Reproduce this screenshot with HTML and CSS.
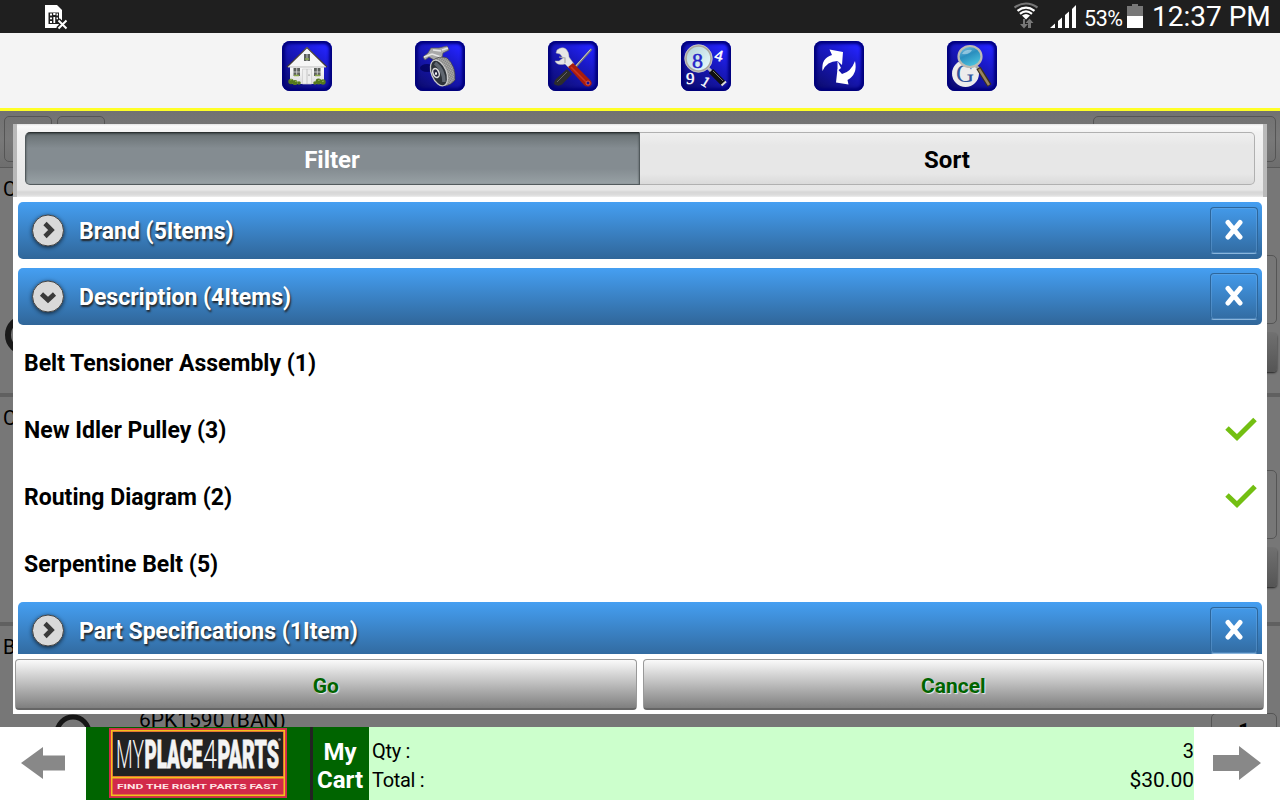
FILE: index.html
```
<!DOCTYPE html>
<html lang="en">
<head>
    <meta charset="UTF-8" />
    <title>MyPlace4Parts - Filter</title>
    <link rel="stylesheet" href="styles.css">
</head>
<body>
    <div class="statusbar">
        <svg class="sim" width="24" height="26" viewBox="0 0 24 26">
            <path d="M0 0H12L17 5V15L13 23H0Z" fill="#fff"/>
            <path d="M3.500 7.500H14V19H3.500Z" fill="#1f1f1f"/>
            <path d="M5 9.500H7M5 13.300H7M5 17H7M11.500 9.500H13M11.500 13.300H13M8.200 9H10.500M9.300 12V18" stroke="#fff" stroke-width="1.800"/>
            <path d="M13 15L22 24M22 15L13 24" stroke="#1f1f1f" stroke-width="5"/>
            <path d="M13.500 15.500L21.500 23.500M21.500 15.500L13.500 23.500" stroke="#fff" stroke-width="2"/>
        </svg>
        <div class="status-right">
            <svg class="wifi" width="24" height="27" viewBox="0 0 24 27" fill="none">
                <path d="M.5 5.500Q12 -2.500 23.500 5.500" stroke="#777" stroke-width="2.200"/>
                <path d="M3.500 8.800Q12 2.500 20.500 8.800M6 11.800Q12 7 18 11.800" stroke="#fff" stroke-width="2.300"/>
                <path d="M8 13.500Q12 10.500 16 13.500L12 17.500Z" fill="#fff"/>
                <path d="M9 17V22H6L10 26.500L14 22H11V17ZM14 26V21H11.500L15.500 16.500L19.500 21H17V26Z" fill="#777"/>
            </svg>
            <svg class="signal" width="27" height="24" viewBox="0 0 27 24" fill="#fff">
                <path d="M0 23L5 18.500V23ZM8 16L12 12.500V23H8ZM15 10L19 6.500V23H15ZM22 4L26 0V23H22Z"/>
            </svg>
            <span class="percent">53%</span>
            <svg class="battery" width="16" height="24" viewBox="0 0 16 24">
                <path d="M0 2H5V0H11V2H16V12H0Z" fill="#777"/>
                <path d="M0 12H16V24H0Z" fill="#fff"/>
            </svg>
            <span class="clock">12:37 PM</span>
        </div>
    </div>

    <div class="header">
        <div class="icon">
            <svg viewBox="0 0 50 50">
                <defs>
                    <linearGradient id="wall" x1="0" y1="0" x2="0" y2="1"><stop offset="0" stop-color="#fff"/><stop offset="1" stop-color="#ddd"/></linearGradient>
                </defs>
                <path d="M8 24H42V43H8Z" fill="url(#wall)"/>
                <path d="M25 6L45 26H5Z" fill="#f6f6f6"/>
                <path d="M5 26L25 6.500L45 26" fill="none" stroke="#433a38" stroke-width="1.200"/>
                <path d="M6 26H44" stroke="#bbb" stroke-width="1"/>
                <path d="M22 13H28V20H22ZM11.500 27H18V35H11.500ZM32 27H38.500V35H32Z" fill="#5c605c"/>
                <path d="M25 13V20M14.700 27V35M35.300 27V35M11 31H18M32 31H39" stroke="#ddd" stroke-width=".8"/>
                <path d="M23 18H27M12 34.500H17M33 34.500H38" stroke="#8aa84a" stroke-width="1.500"/>
                <path d="M20.500 28H29.500V43H20.500Z" fill="#eee" stroke="#ccc" stroke-width=".7"/>
                <path d="M25 28V43" stroke="#bbb" stroke-width=".8"/>
                <circle cx="27" cy="34" r=".5" fill="#333"/>
                <g fill="#567a1c"><circle cx="9" cy="40.500" r="2.700"/><circle cx="13" cy="41.500" r="2.600"/><circle cx="17" cy="42" r="1.800"/><circle cx="41" cy="41" r="2.700"/><circle cx="36.500" cy="40.500" r="2.900"/><circle cx="33" cy="42" r="1.800"/></g>
                <path d="M8 39L10 38.500M13 40.500L15 40M36 39.500L38 39M40 40.500L42 40" stroke="#93b44c" stroke-width="1"/>
            </svg>
        </div>
        <div class="icon">
            <svg viewBox="0 0 50 50">
                <defs>
                    <pattern id="mesh" width="2" height="2" patternUnits="userSpaceOnUse" patternTransform="rotate(30)"><rect width="2" height="2" fill="#b4b4b0"/><path d="M0 0H2M0 0V2" stroke="#5c5c5c" stroke-width=".7"/></pattern>
                </defs>
                <ellipse cx="12" cy="27" rx="7" ry="4" fill="#000050" opacity=".7"/>
                <path d="M8 16L13 12L16 7L24 7L32 5L34 9L28 12L27 17L19 19L14 16L10 19Z" fill="#a9a9a9" stroke="#555" stroke-width=".7"/>
                <path d="M9 16L17 13M18 9L26 10M27 9L33 7M17 13L26 16" stroke="#e6e6e6" stroke-width="1.400"/>
                <path d="M17 20Q24 14 32 17Q41 25 40 39Q36 44 30 45Z" fill="url(#mesh)" stroke="#444" stroke-width=".7"/>
                <ellipse cx="24" cy="32" rx="7.500" ry="13.500" transform="rotate(-22 24 32)" fill="#2e3339" stroke="#c9c9c9" stroke-width="1.300"/>
                <path d="M20 22Q29 29 29 41" stroke="#606770" stroke-width="3.500" fill="none"/>
                <ellipse cx="21" cy="32" rx="3" ry="4.600" transform="rotate(-22 21 32)" fill="#26263f" stroke="#ddd" stroke-width="1.500"/>
                <ellipse cx="21" cy="32.500" rx="1" ry="1.600" fill="#fff"/>
            </svg>
        </div>
        <div class="icon">
            <svg viewBox="0 0 50 50">
                <path d="M43.500 8L24 30" stroke="#777" stroke-width="2.200"/>
                <path d="M42.500 8.500L25 28" stroke="#d0d0d0" stroke-width="1"/>
                <path d="M19 28L24 33L14 43.500Q10 46 6 43Q6 40 8 38Z" fill="#2d2d2d"/>
                <path d="M19 31L9 41" stroke="#666" stroke-width="1"/>
                <path d="M7 20L11 20L15 17L12 13L8 12L9 9Q14 5 18 8Q21 11 21 16L26 23L21 27L17 23Q9 25 7 20Z" fill="#e6e6e6" stroke="#aaa" stroke-width=".5"/>
                <path d="M11 16L17 17L17 22" stroke="#aaa" fill="none" stroke-width="1.200"/>
                <path d="M20 26L25 22L43 40Q45 44 41 45.500Q38 46 36 44Z" fill="#a81c0c"/>
                <path d="M23 26L38 41" stroke="#c83420" stroke-width="1.600"/>
                <circle cx="40" cy="42" r="2" fill="#1414a0" stroke="#e8604a" stroke-width=".9"/>
            </svg>
        </div>
        <div class="icon">
            <svg viewBox="0 0 50 50">
                <defs>
                    <linearGradient id="lens" x1="0" y1="0" x2="1" y2="1"><stop offset="0" stop-color="#b0ced6"/><stop offset="1" stop-color="#ecffff"/></linearGradient>
                </defs>
                <path d="M27 27L32 32" stroke="#bbb" stroke-width="3"/>
                <path d="M30 30L43 43" stroke="#111" stroke-width="6"/>
                <path d="M32 30L42 40" stroke="#777" stroke-width="1"/>
                <path d="M40.500 44.500L45 40.500" stroke="#ddd" stroke-width="2"/>
                <circle cx="17.500" cy="17.500" r="12.800" fill="url(#lens)" stroke="#aaa89f" stroke-width="2.200"/>
                <circle cx="17.500" cy="17.500" r="13.800" fill="none" stroke="#ddd" stroke-width=".6"/>
                <text x="11" y="27" class="digit" font-size="22" fill="#2525c8" stroke="#2525c8" stroke-width=".5">8</text>
                <text x="34" y="20" class="digit" font-size="16" fill="#fff" stroke="#fff" stroke-width=".5" transform="rotate(14 38 14)">4</text>
                <text x="5" y="43" class="digit" font-size="17" fill="#fff" stroke="#fff" stroke-width=".4">9</text>
                <text x="21" y="46" class="digit" font-size="15" fill="#fff" stroke="#fff" stroke-width=".4" transform="rotate(32 25 41)">1</text>
            </svg>
        </div>
        <div class="icon">
            <svg viewBox="0 0 50 50" fill="#fff">
                <path d="M8.500 30Q7 17 18 14L15.500 8.500L29 11L28 24L23.500 20Q13 20 8.500 30Z"/>
                <path d="M41 20Q44 33 33.500 39L34.500 43.500L22 41.500L23.500 28L28 33Q37 31 41 20Z"/>
                <path d="M23.500 20L27 27L23.500 30Z"/>
            </svg>
        </div>
        <div class="icon">
            <svg viewBox="0 0 50 50">
                <defs>
                    <linearGradient id="glass" x1="0" y1="0" x2=".5" y2="1"><stop offset="0" stop-color="#8ccae6"/><stop offset=".5" stop-color="#2a8ebe"/><stop offset="1" stop-color="#49c0dc"/></linearGradient>
                </defs>
                <circle cx="18.500" cy="32.500" r="13.500" fill="#ececec"/>
                <text x="9" y="41" class="digit" font-size="25" fill="#31569c">G</text>
                <path d="M29 25L33 29" stroke="#aaa" stroke-width="3"/>
                <path d="M31.500 27L42.500 44.500" stroke="#3c301c" stroke-width="5"/>
                <path d="M32 28L42 44" stroke="#9a8560" stroke-width="2.500"/>
                <ellipse cx="23" cy="15.500" rx="11.500" ry="10.500" fill="url(#glass)" stroke="#bcbcb4" stroke-width="2.200"/>
                <path d="M15 13Q18 8 25 9Q23 14 15 13Z" fill="#fff" opacity=".4"/>
            </svg>
        </div>
    </div>

    <div class="stage">
        <div class="results">
            <div class="toolbar">
                <span class="tool"></span>
                <span class="tool"></span>
                <span class="tool wide"></span>
            </div>
            <div class="result">
                <span class="part">C</span>
                <svg class="thumb left" width="50" height="50"><circle cx="25" cy="25" r="17" fill="none" stroke="#1a1a1a" stroke-width="6"/></svg>
                <div class="side">
                    <span class="qty"></span>
                    <span class="add"></span>
                </div>
            </div>
            <div class="result high">
                <span class="part">C</span>
                <div class="side">
                    <span class="qty"></span>
                    <span class="add"></span>
                </div>
            </div>
            <div class="result">
                <span class="part">B</span>
                <svg class="thumb" width="40" height="40"><circle cx="20" cy="20" r="16" fill="none" stroke="#161616" stroke-width="5"/></svg>
                <span class="number">6PK1590 (BAN)</span>
                <div class="side">
                    <span class="qty">1</span>
                </div>
            </div>
        </div>

        <div class="dialog">
            <div class="tabs">
                <div class="tab active">Filter</div>
                <div class="tab">Sort</div>
            </div>
            <div class="filters">
                <div class="bar">
                    <svg class="arrow" viewBox="0 0 34 34"><circle cx="17" cy="16.500" r="15.500"/><path d="M14 9.500L20.500 16L14 22.500"/></svg>
                    <span class="bar-title">Brand (5Items)</span>
                    <span class="close"><svg viewBox="0 0 20 22"><path d="M4 3.500L16 18M16 3.500L4 18"/></svg></span>
                </div>
                <div class="bar">
                    <svg class="arrow" viewBox="0 0 34 34"><circle cx="17" cy="16.500" r="15.500"/><path d="M10.500 14L17 20L23.500 14"/></svg>
                    <span class="bar-title">Description (4Items)</span>
                    <span class="close"><svg viewBox="0 0 20 22"><path d="M4 3.500L16 18M16 3.500L4 18"/></svg></span>
                </div>
                <ul>
                    <li>Belt Tensioner Assembly (1)</li>
                    <li>New Idler Pulley (3)<svg class="check" viewBox="0 0 32 24"><path d="M2 11L12 20.500L30 2.500"/></svg></li>
                    <li>Routing Diagram (2)<svg class="check" viewBox="0 0 32 24"><path d="M2 11L12 20.500L30 2.500"/></svg></li>
                    <li>Serpentine Belt (5)</li>
                </ul>
                <div class="bar">
                    <svg class="arrow" viewBox="0 0 34 34"><circle cx="17" cy="16.500" r="15.500"/><path d="M14 9.500L20.500 16L14 22.500"/></svg>
                    <span class="bar-title">Part Specifications (1Item)</span>
                    <span class="close"><svg viewBox="0 0 20 22"><path d="M4 3.500L16 18M16 3.500L4 18"/></svg></span>
                </div>
            </div>
            <div class="actions">
                <button>Go</button>
                <button>Cancel</button>
            </div>
        </div>
    </div>

    <div class="footer">
        <div class="nav">
            <svg width="44" height="32" viewBox="0 0 44 32"><path d="M0 16L22 0V8.500H44V23.500H22V32Z" fill="#888"/></svg>
        </div>
        <div class="brand">
            <svg width="178" height="70" viewBox="0 0 178 70">
                <rect width="178" height="70" fill="#d22a4a"/>
                <rect x="2.700" y="2.700" width="172.600" height="64.600" fill="none" stroke="#f2c21c" stroke-width="1.600"/>
                <rect x="4" y="4" width="170" height="44" fill="#222"/>
                <path d="M3 49.500H175" stroke="#f2c21c" stroke-width="1.800"/>
                <g fill="#f4f4f4" font-size="38.500">
                    <text x="7" y="39.500" font-weight="300" textLength="28" lengthAdjust="spacingAndGlyphs">MY</text>
                    <text x="35.500" y="39.500" font-weight="900" stroke="#f4f4f4" stroke-width=".8" textLength="58" lengthAdjust="spacingAndGlyphs">PLACE</text>
                    <text x="94" y="39.500" font-weight="300" textLength="14" lengthAdjust="spacingAndGlyphs">4</text>
                    <text x="108.500" y="39.500" font-weight="900" stroke="#f4f4f4" stroke-width=".8" textLength="61.500" lengthAdjust="spacingAndGlyphs">PARTS</text>
                </g>
                <circle cx="170.500" cy="11.500" r="1.300" fill="#999"/>
                <text x="8" y="61" font-size="7.800" font-weight="700" fill="#ffe3e3" textLength="161" lengthAdjust="spacingAndGlyphs">FIND THE RIGHT PARTS FAST</text>
            </svg>
        </div>
        <div class="cart">My<br>Cart</div>
        <div class="totals">
            <div class="line"><span class="label">Qty :</span><span>3</span></div>
            <div class="line"><span class="label">Total :</span><span class="sum">$30.00</span></div>
        </div>
        <div class="nav">
            <svg width="50" height="34" viewBox="0 0 50 34"><path d="M49 17L27 0V9H1V25H27V34Z" fill="#888"/></svg>
        </div>
    </div>
</body>
</html>
```
FILE: styles.css
```
* {
    box-sizing: border-box;
}

html, body {
    margin: 0;
    height: 100%;
    overflow: hidden;
    font-family: Roboto, "Liberation Sans", sans-serif;
    color: #000;
}

body {
    display: flex;
    flex-direction: column;
    background: #fff;
}

svg {
    display: block;
    flex: none;
}

/* status bar */
.statusbar {
    flex: none;
    height: 33px;
    background: #1f1f1f;
    color: #fff;
    display: flex;
    justify-content: space-between;
    padding: 0 9px 0 45px;
}

.sim {
    margin-top: 5px;
}

.status-right {
    display: flex;
    align-items: center;
}

.wifi {
    margin: 0 12px 2px 0;
}

.signal {
    margin-right: 7px;
}

.percent {
    font-size: 21.5px;
    width: 39px;
    margin: 3px 4px 0 0;
    letter-spacing: -0.4px;
}

.battery {
    margin: 0 9px 1px 0;
}

.clock {
    font-size: 28px;
    width: 119px;
    white-space: nowrap;
}

/* icon header */
.header {
    flex: none;
    height: 78px;
    background: #f4f4f4;
    border-bottom: 3px solid #ffff26;
    display: flex;
    justify-content: center;
    gap: 83px;
    padding: 8px 1px 0 0;
}

.icon {
    width: 50px;
    height: 50px;
    border-radius: 8px;
    background: linear-gradient(215deg, #2424ff 12%, #1919c4 40%, #0d0d74 90%);
    box-shadow: inset 0 0 3px 3px #00007c;
}

.digit {
    font-family: "Liberation Serif", serif;
}

/* dimmed results behind the dialog */
.stage {
    flex: none;
    height: 616px;
    position: relative;
    overflow: hidden;
    background: #777;
}

.toolbar {
    height: 57px;
    border-bottom: 1px solid #595959;
    background: linear-gradient(#727272, #797979 50%, #6e6e6e);
    display: flex;
    gap: 5px;
    padding: 5px 4px;
}

.tool {
    width: 48px;
    height: 46px;
    border: 1px solid #555;
    border-radius: 5px;
}

.tool.wide {
    width: 183px;
    margin-left: auto;
}

.result {
    height: 229px;
    border-bottom: 4px solid #606060;
    display: flex;
    padding: 0 3px;
    font-size: 20px;
}

.part {
    width: 55px;
    padding-top: 9px;
}

.thumb {
    margin: 87px 0 0 -5px;
}

.thumb.left {
    margin: 142px 0 0 -58px;
}

.number {
    margin: 82px 0 0 46px;
    font-size: 21px;
}

.side {
    margin: 87px 0 0 auto;
    width: 66px;
}

.high .side {
    margin-top: 73px;
}

.qty {
    display: block;
    height: 69px;
    border: 1px solid #555;
    border-radius: 5px;
    text-align: center;
    font-weight: 700;
    padding-top: 5px;
}

.add {
    display: block;
    height: 39px;
    margin-top: 9px;
    border-radius: 4px;
    background: linear-gradient(#707070, #555);
    box-shadow: 0 1px 2px #222;
}

/* dialog */
.dialog {
    position: absolute;
    top: 13px;
    left: 13px;
    width: 1254px;
    height: 590px;
    background: #fff;
}

.tabs {
    height: 73px;
    border: solid #b9b9b9;
    border-width: 0 4px;
    background: linear-gradient(#e2e2e2 0, #fbfbfb 2px, #f2f2f2 8px, #e6e6e6 66px, #d6d6d6 68px, #dcdcdc 71px, #eee 73px);
    display: flex;
    padding: 8px;
}

.tab {
    flex: 1 1 0;
    height: 53px;
    border: 1px solid #b0b0b0;
    border-left: 0;
    border-radius: 0 5px 5px 0;
    background: linear-gradient(#efefef, #e7e7e7 25%, #e7e7e7 80%, #dadada);
    font-size: 24px;
    font-weight: 700;
    line-height: 54px;
    text-align: center;
}

.tab.active {
    flex: none;
    width: 615px;
    padding-right: 1px;
    border: 1px solid #525a5d;
    border-top-color: #2c3132;
    border-radius: 5px 0 0 5px;
    background: linear-gradient(#687073, #848c91 30%, #848c91 70%, #98a1a5);
    box-shadow: inset 0 1px 2px #3d4547;
    color: #fff;
}

.filters {
    height: 457px;
    overflow: hidden;
    padding: 1px 5px;
    display: flow-root;
}

.bar {
    height: 57px;
    margin: 4px 0 9px;
    border-radius: 5px;
    background: linear-gradient(#459ff2, #306699);
    display: flex;
    align-items: center;
    padding: 0 4px 0 13px;
}

.bar + .bar {
    margin-bottom: 4px;
}

.arrow {
    width: 34px;
    height: 34px;
    overflow: visible;
    filter: drop-shadow(0 1px 2px rgba(0, 0, 0, 0.7));
}

.arrow circle {
    fill: #d9d9d9;
    stroke: #444;
    stroke-width: 1;
}

.arrow path {
    fill: none;
    stroke: #3a3a3a;
    stroke-width: 4.6;
}

.bar-title {
    margin-left: 14px;
    padding-top: 2px;
    font-size: 23px;
    font-weight: 700;
    color: #fff;
    text-shadow: 1px 2px 2px #222;
}

.close {
    width: 48px;
    height: 47px;
    margin-left: auto;
    padding-bottom: 1px;
    border: 1px solid #2d669b;
    border-bottom-color: #8ab5dc;
    border-radius: 4px;
    box-shadow: inset 0 0 0 1px rgba(120, 175, 225, 0.35);
    display: flex;
    justify-content: center;
    align-items: center;
}

.close svg {
    width: 20px;
    height: 22px;
}

.close path {
    stroke: #fff;
    stroke-width: 5;
    stroke-linecap: round;
}

ul {
    list-style: none;
    margin: 0 0 5px;
    padding: 0;
}

li {
    height: 67px;
    display: flex;
    align-items: center;
    justify-content: space-between;
    padding: 2px 5px 0 6px;
    font-size: 23px;
    font-weight: 700;
}

.check {
    width: 32px;
    height: 24px;
    margin-bottom: 4px;
}

.check path {
    fill: none;
    stroke: #73bf12;
    stroke-width: 5;
}

.actions {
    display: flex;
    gap: 6px;
    padding: 5px 3px 0 2px;
}

.actions button {
    flex: 1;
    height: 51px;
    border: 1px solid #999;
    border-bottom: 2px solid #666;
    border-radius: 4px;
    background: linear-gradient(#fafafa, #7f7f7f);
    padding: 4px 0 0;
    font: 700 21px Roboto, "Liberation Sans", sans-serif;
    color: #006400;
    text-shadow: 1px 1px 1px #eee;
}

/* footer */
.footer {
    height: 73px;
    display: flex;
}

.nav {
    width: 86px;
    padding-bottom: 2px;
    display: flex;
    justify-content: center;
    align-items: center;
}

.brand {
    width: 227px;
    background: #006400;
    border-right: 3px solid #222;
    padding: 1px 0 0 23px;
}

.cart {
    width: 56px;
    padding: 11px 2px 0 0;
    background: #006400;
    color: #fff;
    font-size: 24px;
    line-height: 28px;
    font-weight: 700;
    text-align: center;
    white-space: nowrap;
}

.totals {
    flex: 1;
    background: #cfc;
    padding: 9px 0 0 3px;
    font-size: 20px;
}

.line {
    height: 29px;
    line-height: 30px;
    display: flex;
    justify-content: space-between;
}

.label {
    letter-spacing: -0.3px;
}

.sum {
    font-size: 21px;
}
```
